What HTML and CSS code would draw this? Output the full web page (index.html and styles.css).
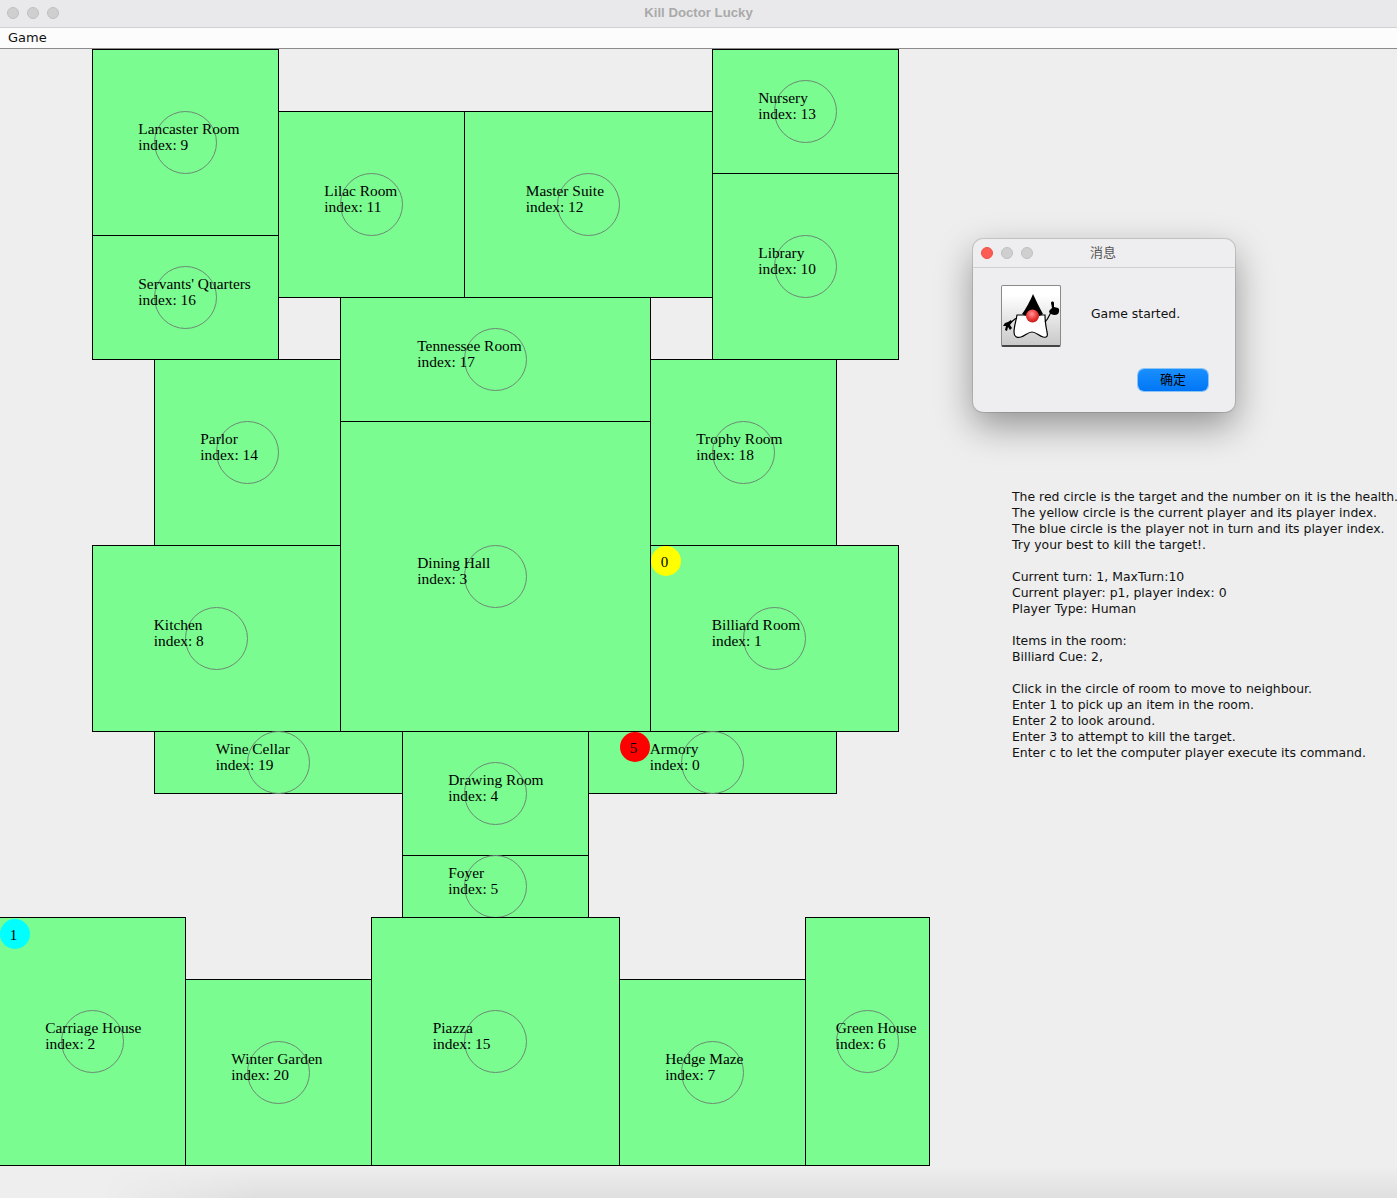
FILE: index.html
```html
<!DOCTYPE html>
<html lang="en">
<head>
<meta charset="utf-8">
<title>Kill Doctor Lucky</title>
<link rel="stylesheet" href="styles.css">
</head>
<body>
<div class="window">
  <header class="titlebar">
    <div class="lights">
      <span class="light"></span><span class="light"></span><span class="light"></span>
    </div>
    <div class="title">Kill Doctor Lucky</div>
  </header>
  <nav class="menubar"><span class="menu-item">Game</span></nav>
  <main class="content">
    <section class="map">
      <div class="room r-lancaster"><span class="ring"></span><span class="label">Lancaster Room<br>index: 9</span></div>
      <div class="room r-servants"><span class="ring"></span><span class="label">Servants' Quarters<br>index: 16</span></div>
      <div class="room r-lilac"><span class="ring"></span><span class="label">Lilac Room<br>index: 11</span></div>
      <div class="room r-master"><span class="ring"></span><span class="label">Master Suite<br>index: 12</span></div>
      <div class="room r-nursery"><span class="ring"></span><span class="label">Nursery<br>index: 13</span></div>
      <div class="room r-library"><span class="ring"></span><span class="label">Library<br>index: 10</span></div>
      <div class="room r-tennessee"><span class="ring"></span><span class="label">Tennessee Room<br>index: 17</span></div>
      <div class="room r-parlor"><span class="ring"></span><span class="label">Parlor<br>index: 14</span></div>
      <div class="room r-trophy"><span class="ring"></span><span class="label">Trophy Room<br>index: 18</span></div>
      <div class="room r-dining"><span class="ring"></span><span class="label">Dining Hall<br>index: 3</span></div>
      <div class="room r-kitchen"><span class="ring"></span><span class="label">Kitchen<br>index: 8</span></div>
      <div class="room r-billiard"><span class="ring"></span><span class="label">Billiard Room<br>index: 1</span></div>
      <div class="room r-wine"><span class="ring"></span><span class="label">Wine Cellar<br>index: 19</span></div>
      <div class="room r-armory"><span class="ring"></span><span class="label">Armory<br>index: 0</span></div>
      <div class="room r-drawing"><span class="ring"></span><span class="label">Drawing Room<br>index: 4</span></div>
      <div class="room r-foyer"><span class="ring"></span><span class="label">Foyer<br>index: 5</span></div>
      <div class="room r-carriage"><span class="ring"></span><span class="label">Carriage House<br>index: 2</span></div>
      <div class="room r-winter"><span class="ring"></span><span class="label">Winter Garden<br>index: 20</span></div>
      <div class="room r-piazza"><span class="ring"></span><span class="label">Piazza<br>index: 15</span></div>
      <div class="room r-hedge"><span class="ring"></span><span class="label">Hedge Maze<br>index: 7</span></div>
      <div class="room r-green"><span class="ring"></span><span class="label">Green House<br>index: 6</span></div>
      <span class="token token-current">0</span>
      <span class="token token-target">5</span>
      <span class="token token-other">1</span>
    </section>
    <aside class="info">
      <p class="para">The red circle is the target and the number on it is the health.<br>The yellow circle is the current player and its player index.<br>The blue circle is the player not in turn and its player index.<br>Try your best to kill the target!.</p>
      <p class="para">Current turn: 1, MaxTurn:10<br>Current player: p1, player index: 0<br>Player Type: Human</p>
      <p class="para">Items in the room:<br>Billiard Cue: 2,</p>
      <p class="para">Click in the circle of room to move to neighbour.<br>Enter 1 to pick up an item in the room.<br>Enter 2 to look around.<br>Enter 3 to attempt to kill the target.<br>Enter c to let the computer player execute its command.</p>
    </aside>
  </main>
</div>

<div class="next-window"></div>

<div class="dialog">
  <div class="dialog-bar">
    <div class="dialog-lights">
      <span class="light light-close"></span><span class="light"></span><span class="light"></span>
    </div>
    <div class="dialog-title">消息</div>
  </div>
  <div class="dialog-body">
    <div class="dialog-row">
      <div class="duke">
        <svg width="58" height="60" viewBox="0 0 58 60">
          <defs>
            <radialGradient id="nose" cx="0.45" cy="0.35" r="0.7">
              <stop offset="0" stop-color="#ff9a9a"/>
              <stop offset="0.55" stop-color="#f03a3a"/>
              <stop offset="1" stop-color="#b81818"/>
            </radialGradient>
          </defs>
          <path class="duke-body" d="M15 29 C14 35 12 41 12 46 C12 51 15 52 19 51 C23 50 26 46 30 46 C34 46 37 50 41 51 C45 52 46 50 45 46 C44 41 43 35 43 29 Z"/>
          <path class="duke-hat" d="M31 8 C28 15 24 23 20 28 C26 32 36 32 41 28 C37 21 34 14 31 8 Z"/>
          <circle cx="30.500" cy="30" r="6.500" fill="url(#nose)"/>
          <path class="duke-arm" d="M15 32 C12 33 11 35 7 38 M43 36 C46 33 47 30 49 26"/>
          <path class="duke-hand" d="M47 26 C47 24 49 23 50 22 L49 17 C49 15 52 15 52 17 L52 21 L56 22 C58 23 57 27 56 28 C53 30 49 29 47 26 Z"/>
          <path class="duke-hand" d="M3 37 L6 36 L9 34 L10 36 L8 39 L10 42 L8 44 L6 41 L5 45 L3 44 L4 40 L1 40 Z"/>
        </svg>
      </div>
      <div class="dialog-text">Game started.</div>
    </div>
    <div class="dialog-actions"><button class="ok" type="button">确定</button></div>
  </div>
</div>
</body>
</html>
```
FILE: styles.css
```css
* { box-sizing: border-box; }
html, body { margin: 0; padding: 0; height: 1198px; overflow: hidden; }
body {
  width: 1397px;
  background: #eeeeee;
  position: relative;
}
.window {
  display: flex;
  flex-direction: column;
  height: 1198px;
}
.titlebar {
  height: 28px;
  flex: none;
  display: flex;
  align-items: center;
  position: relative;
  background: #e9e9eb;
  border-bottom: 1px solid #d2d2d2;
}
.lights { display: flex; gap: 8px; padding-left: 7px; margin-top: -2px; }
.light {
  display: block;
  width: 12px;
  height: 12px;
  border-radius: 50%;
  background: #cfcfcf;
  border: 1px solid #c0c0c0;
}
.title {
  position: absolute;
  left: 0;
  right: 0;
  top: 5px;
  text-align: center;
  font: bold 13.2px/16px "Liberation Sans", Arial, sans-serif;
  color: #a9a9a9;
}
.menubar {
  height: 21px;
  flex: none;
  background: #fcfcfc;
  border-bottom: 1px solid #8c8c8c;
  padding-left: 8px;
  font: 13px/20px "DejaVu Sans", sans-serif;
  color: #111;
}
.content {
  flex: 1;
  display: flex;
  min-height: 0;
}
.map {
  position: relative;
  flex: none;
  width: 1012px;
  height: 1149px;
  overflow: hidden;
}
.room {
  position: absolute;
  background: #7afc90;
  border: 1px solid #000;
}
.ring {
  position: absolute;
  left: 50%;
  top: 50%;
  width: 63px;
  height: 63px;
  margin: -32px 0 0 -32px;
  border: 1px solid #6c8a74;
  border-radius: 50%;
}
.label {
  position: absolute;
  left: calc(25% - 1px);
  top: calc(50% - 22px);
  white-space: nowrap;
  font: 15.4px/16px "Liberation Serif", "Times New Roman", serif;
  color: #000;
}
.r-lancaster { left: 92px;  top: 0;     width: 187px; height: 187px; }
.r-servants  { left: 92px;  top: 186px; width: 187px; height: 125px; }
.r-lilac     { left: 278px; top: 62px;  width: 187px; height: 187px; }
.r-master    { left: 464px; top: 62px;  width: 249px; height: 187px; }
.r-nursery   { left: 712px; top: 0;     width: 187px; height: 125px; }
.r-library   { left: 712px; top: 124px; width: 187px; height: 187px; }
.r-tennessee { left: 340px; top: 248px; width: 311px; height: 125px; }
.r-parlor    { left: 154px; top: 310px; width: 187px; height: 187px; }
.r-trophy    { left: 650px; top: 310px; width: 187px; height: 187px; }
.r-dining    { left: 340px; top: 372px; width: 311px; height: 311px; }
.r-kitchen   { left: 92px;  top: 496px; width: 249px; height: 187px; }
.r-billiard  { left: 650px; top: 496px; width: 249px; height: 187px; }
.r-wine      { left: 154px; top: 682px; width: 249px; height: 63px; }
.r-armory    { left: 588px; top: 682px; width: 249px; height: 63px; }
.r-drawing   { left: 402px; top: 682px; width: 187px; height: 125px; }
.r-foyer     { left: 402px; top: 806px; width: 187px; height: 63px; }
.r-carriage  { left: -1px;  top: 868px; width: 187px; height: 249px; }
.r-winter    { left: 185px; top: 930px; width: 187px; height: 187px; }
.r-piazza    { left: 371px; top: 868px; width: 249px; height: 249px; }
.r-hedge     { left: 619px; top: 930px; width: 187px; height: 187px; }
.r-green     { left: 805px; top: 868px; width: 125px; height: 249px; }
.token {
  position: absolute;
  width: 30px;
  height: 30px;
  border-radius: 50%;
  font: 15px/32px "Liberation Serif", "Times New Roman", serif;
  color: #000;
  text-align: center;
  padding-right: 3px;
}
.token-current { left: 651px; top: 497px; background: #ffff00; }
.token-target  { left: 620px; top: 683px; background: #ff0000; }
.token-other   { left: 0;     top: 870px; background: #00ffff; }
.info {
  flex: none;
  padding-top: 440px;
  white-space: nowrap;
  font: 12.45px/16px "DejaVu Sans", "Liberation Sans", sans-serif;
  color: #111;
}
.para { margin: 0 0 16px; }
.next-window {
  position: absolute;
  left: 100px;
  right: 0;
  top: 1167px;
  height: 31px;
  background: linear-gradient(transparent, rgba(0, 0, 0, 0.06));
  -webkit-mask-image: linear-gradient(to right, transparent, #000 160px);
  mask-image: linear-gradient(to right, transparent, #000 160px);
}
.dialog {
  position: absolute;
  left: 973px;
  top: 239px;
  width: 262px;
  height: 173px;
  display: flex;
  flex-direction: column;
  background: #eeeef0;
  border-radius: 10px;
  box-shadow: 0 0 0 1px rgba(0, 0, 0, 0.12), 0 14px 36px rgba(0, 0, 0, 0.38);
}
.dialog-bar {
  height: 29px;
  flex: none;
  display: flex;
  align-items: center;
  position: relative;
  border-bottom: 1px solid #cfcfcf;
}
.dialog-lights { display: flex; gap: 8px; padding-left: 8px; }
.light-close { background: #fd5c54; border-color: #ee4f47; }
.dialog-title {
  position: absolute;
  left: 0;
  right: 2px;
  top: 4px;
  text-align: center;
  font: 13px/18px "Noto Sans CJK SC", sans-serif;
  color: #555;
}
.dialog-body {
  flex: 1;
  display: flex;
  flex-direction: column;
  padding: 17px 27px 21px 28px;
}
.dialog-row { display: flex; align-items: flex-start; }
.duke {
  width: 60px;
  height: 62px;
  flex: none;
  border: 1px solid #8a8a8a;
  border-bottom: 2px solid #444;
  border-radius: 2px;
  background: linear-gradient(#ffffff 15%, #c9c9c9);
}
.duke svg { display: block; }
.duke-body { fill: #fff; stroke: #000; stroke-width: 1.2; }
.duke-hat { fill: #000; }
.duke-arm { fill: none; stroke: #000; stroke-width: 1.2; }
.duke-hand { fill: #000; }
.dialog-text {
  margin: 21px 0 0 30px;
  font: 12.4px/16px "DejaVu Sans", sans-serif;
  color: #111;
}
.dialog-actions {
  margin-top: auto;
  display: flex;
  justify-content: flex-end;
}
.ok {
  width: 70px;
  height: 22px;
  padding: 0 0 2px;
  border: 0;
  border-radius: 6px;
  background: linear-gradient(#1a8fff, #0076f5);
  box-shadow: 0 0 0 1px #8cc4f5;
  font: 13px/20px "Noto Sans CJK SC", sans-serif;
  color: #000;
}
```
